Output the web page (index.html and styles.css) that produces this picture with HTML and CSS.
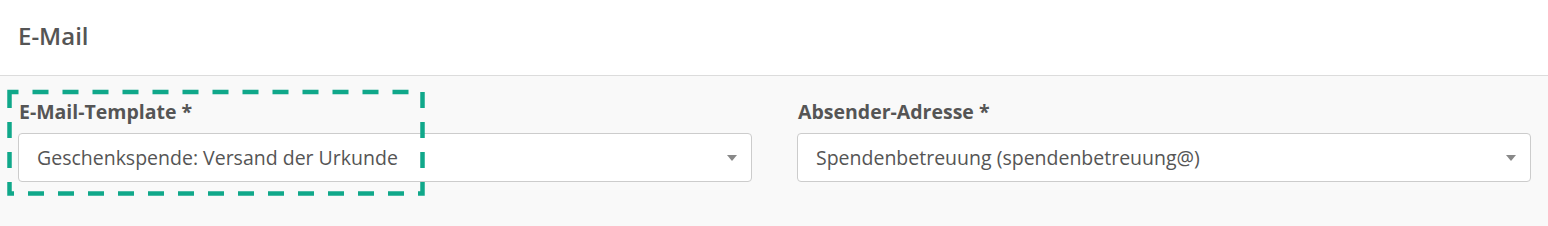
FILE: index.html
```html
<!DOCTYPE html>
<html lang="de">
<head>
<meta charset="utf-8">
<title>E-Mail</title>
<link rel="stylesheet" href="styles.css">
</head>
<body>
<div class="panel">
  <div class="panel-header">
    <h2 class="panel-title">E-Mail</h2>
  </div>
  <div class="panel-body">
    <div class="field field-highlight">
      <label class="field-label">E-Mail-Template *</label>
      <div class="select">
        <span class="select-value">Geschenkspende: Versand der Urkunde</span>
        <span class="select-arrow"></span>
      </div>
      <svg class="highlight" width="420" height="108" viewBox="0 0 420 108" aria-hidden="true">
        <path d="M2.5 4 L2.5 105.5 L415.5 105.5 L415.5 4 Z" fill="none" stroke="#10a88a" stroke-width="4.5" stroke-dasharray="16 14" stroke-dashoffset="0"/>
      </svg>
    </div>
    <div class="field">
      <label class="field-label">Absender-Adresse *</label>
      <div class="select">
        <span class="select-value">Spendenbetreuung (spendenbetreuung@)</span>
        <span class="select-arrow"></span>
      </div>
    </div>
  </div>
</div>
</body>
</html>
```
FILE: styles.css
```css
html, body {
  margin: 0;
  padding: 0;
}
body {
  font-family: "Open Sans", "Liberation Sans", sans-serif;
  color: #555;
  background: #f9f9f9;
}
.panel {
  width: 1548px;
  height: 226px;
  background: #f9f9f9;
}
.panel-header {
  background: #fff;
  border-bottom: 1px solid #dcdcdc;
  display: flex;
  align-items: center;
  padding-left: 18px;
  padding-bottom: 4px;
  box-sizing: border-box;
  height: 76px;
}
.panel-title {
  margin: 0;
  font-size: 24px;
  font-weight: 600;
  color: #555;
  line-height: 1;
}
.panel-body {
  display: grid;
  grid-template-columns: 734px 734px;
  column-gap: 45px;
  padding: 23px 17px 0 18px;
}
.field {
  display: flex;
  flex-direction: column;
  gap: 8px;
}
.field-highlight {
  position: relative;
}
.highlight {
  position: absolute;
  left: -11px;
  top: -11px;
  pointer-events: none;
}
.field-label {
  font-size: 19.5px;
  font-weight: 700;
  color: #555;
  line-height: 26px;
  padding-left: 1px;
}
.select {
  height: 49px;
  box-sizing: border-box;
  background: #fff;
  border: 1px solid #ccc;
  border-radius: 4px;
  display: flex;
  align-items: center;
  justify-content: space-between;
  padding: 0 14px 0 18px;
}
.select-value {
  font-size: 19.5px;
  color: #555;
}
.select-arrow {
  width: 0;
  height: 0;
  border-left: 5px solid transparent;
  border-right: 5px solid transparent;
  border-top: 6px solid #888;
}
```
